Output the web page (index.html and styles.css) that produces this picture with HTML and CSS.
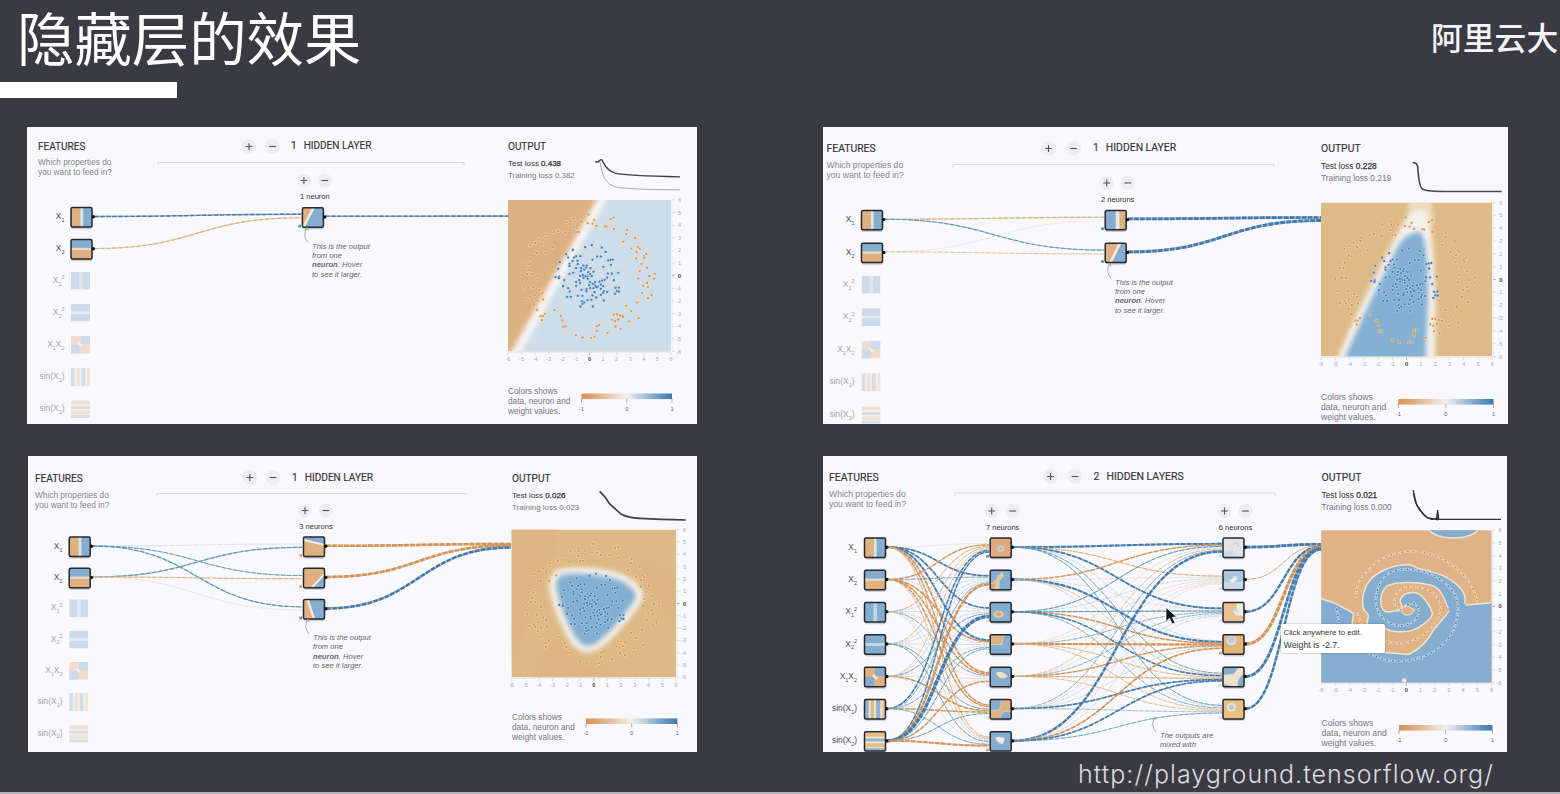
FILE: index.html
```
<!DOCTYPE html>
<html lang="zh-CN">
<head>
<meta charset="utf-8">
<title>隐藏层的效果</title>
<link rel="stylesheet" href="styles.css">
</head>
<body>
<div class="slide">
  <header class="slide-header">
    <h1 class="slide-title">隐藏层的效果</h1>
    <div class="brand">阿里云大</div>
  </header>
  <div class="accent-bar"></div>
  <main class="panels">
    <section class="panel panel-a">
      <svg class="network" id="net-a" viewBox="27 126.5 670 297"></svg>
      <div class="features"><h2>FEATURES</h2><p>Which properties do<br>you want to feed in?</p></div>
      <h2 class="layers"><span>1</span><span>HIDDEN LAYER</span></h2>
      <div class="output"><h2>OUTPUT</h2><p class="loss">Test loss <b>0.438</b></p><p class="loss train">Training loss 0.382</p><p class="legend">Colors shows<br>data, neuron and<br>weight values.</p></div>
    </section>
    <section class="panel panel-b">
      <svg class="network" id="net-b" viewBox="823 126.5 685 297"></svg>
      <div class="features"><h2>FEATURES</h2><p>Which properties do<br>you want to feed in?</p></div>
      <h2 class="layers"><span>1</span><span>HIDDEN LAYER</span></h2>
      <div class="output"><h2>OUTPUT</h2><p class="loss">Test loss <b>0.228</b></p><p class="loss train">Training loss 0.219</p><p class="legend">Colors shows<br>data, neuron and<br>weight values.</p></div>
    </section>
    <section class="panel panel-c">
      <svg class="network" id="net-c" viewBox="28 456 669 296"></svg>
      <div class="features"><h2>FEATURES</h2><p>Which properties do<br>you want to feed in?</p></div>
      <h2 class="layers"><span>1</span><span>HIDDEN LAYER</span></h2>
      <div class="output"><h2>OUTPUT</h2><p class="loss">Test loss <b>0.026</b></p><p class="loss train">Training loss 0.023</p><p class="legend">Colors shows<br>data, neuron and<br>weight values.</p></div>
    </section>
    <section class="panel panel-d">
      <svg class="network" id="net-d" viewBox="823 456 684 296"></svg>
      <div class="features"><h2>FEATURES</h2><p>Which properties do<br>you want to feed in?</p></div>
      <h2 class="layers"><span>2</span><span>HIDDEN LAYERS</span></h2>
      <div class="output"><h2>OUTPUT</h2><p class="loss">Test loss <b>0.021</b></p><p class="loss train">Training loss 0.000</p><p class="legend">Colors shows<br>data, neuron and<br>weight values.</p></div>
      <div class="weight-tip">Click anywhere to edit.<br><span>Weight is -2.7.</span></div>
    </section>
  </main>
  <footer class="source">http://playground.tensorflow.org/</footer>
</div>
<script src="network.js"></script>
</body>
</html>
```
FILE: styles.css
```
* { box-sizing: border-box; }
body { margin: 0; background: #3a3a43; font-family: "Liberation Sans", Arial, sans-serif; }
h1, h2, p { margin: 0; font-weight: 400; }
.slide { width: 1560px; height: 794px; display: flex; flex-direction: column; border-bottom: 2px solid #b4b4b8; background: #3a3a43; }
.slide-header { height: 82px; flex: none; display: flex; justify-content: space-between; color: #fff; font-family: "Noto Sans CJK SC", sans-serif; white-space: nowrap; }
.slide-title { font-size: 57.4px; line-height: 72px; padding-left: 17px; }
.brand { font-size: 31.8px; line-height: 72px; width: 129px; font-weight: 500; color: #f4f4f7; }
.accent-bar { width: 177px; height: 16px; flex: none; background: #fff; }
.panels { display: grid; grid-template-columns: 670px 685px; grid-template-rows: 297px 296px; column-gap: 126px; row-gap: 32.4px; padding: 28.6px 0 0 27px; }
.panel { position: relative; overflow: hidden; display: grid; background: #f9f8fd; color: #333338; }
.panel-a { grid-template-columns: 253px 217px 1fr; padding: 14px 0 6.5px 11px; --head: 10px; --body: 8.25px; }
.panel-b { grid-template-columns: 266.5px 228px 1fr; padding: 16px 0 1.5px 3.5px; --head: 10.4px; --body: 8.65px; }
.panel-c { margin-left: 1px; grid-template-columns: 257px 220px 1fr; padding: 17px 0 10px 7px; --head: 10.1px; --body: 8.3px; }
.panel-d { margin-right: 1px; grid-template-columns: 264.5px 228px 1fr; padding: 16px 0 3.5px 6px; --head: 10.5px; --body: 8.65px; }
.panel h2 { position: relative; font-family: Roboto, sans-serif; font-size: var(--head); line-height: 12px; white-space: nowrap; -webkit-text-stroke: 0.15px #333338; }
.features p { position: relative; font-size: var(--body); line-height: 10px; margin-top: 5.5px; color: #85858c; }
.layers { display: flex; gap: 7px; top: -0.5px; }
.output { position: relative; display: flex; flex-direction: column; white-space: nowrap; }
.loss { font-size: calc(var(--body) - 0.3px); line-height: 12px; margin-top: 5px; }
.loss b { font-weight: 400; -webkit-text-stroke: 0.25px #333338; }
.loss.train { color: #77777e; margin-top: 0; }
.legend { margin-top: auto; font-size: var(--body); line-height: 10px; color: #77777e; }
.network { position: absolute; inset: 0; width: 100%; height: 100%; font-family: "Liberation Sans", Arial, sans-serif; }
.weight-tip { position: absolute; left: 458px; top: 168px; width: 104px; height: 29px; padding: 3px 2.5px; border-radius: 2px; background: #fff; box-shadow: 0 0 2px rgba(0,0,0,.4); font-size: 7.8px; line-height: 12px; color: #333338; white-space: nowrap; }
.weight-tip span { font-size: 8.8px; }
.source { height: 38px; margin-top: 4px; padding-right: 66px; text-align: right; font: 300 25px/37px Inter, sans-serif; letter-spacing: 1.05px; color: #dcdce0; white-space: nowrap; }
```
FILE: network.js
```
const ORANGE = '#dfb180', BLUE = '#84add0', INK = '#25262e';

// Training samples, in units of a 488 x 455 plot.
const outer = [[325,282],[400,291],[391,296],[342,298],[282,294],[259,305],[284,303],[303,303],[323,308],[337,309],[349,316],[374,317],[379,318],[401,325],[441,329],[438,341],[282,319],[288,335],[296,334],[235,331],[222,335],[256,337],[199,342],[196,351],[177,357],[165,367],[150,375],[187,370],[217,379],[163,395],[171,397],[196,397],[465,353],[429,363],[453,384],[473,379],[478,384],[469,394],[498,401],[491,407],[468,414],[492,413],[484,430],[500,442],[478,452],[523,460],[507,467],[521,475],[474,474],[500,487],[489,496],[503,499],[485,517],[514,524],[503,533],[471,546],[438,556],[453,572],[475,593],[447,603],[152,416],[137,431],[148,431],[145,448],[125,463],[142,461],[155,461],[172,477],[131,499],[160,500],[178,509],[187,517],[164,524],[137,535],[151,530],[155,537],[172,541],[189,537],[162,552],[171,568],[195,580],[182,587],[188,587],[186,599],[223,569],[242,587],[247,600],[250,619],[256,618],[287,644],[307,651],[333,652],[343,649],[349,631],[350,617],[357,614],[382,637],[421,625],[406,618],[401,582],[410,582],[420,585],[428,588],[395,598],[404,602],[414,597]];
const inner = [[335,374],[315,380],[365,381],[278,388],[376,394],[258,401],[264,411],[288,407],[301,407],[282,411],[337,417],[351,408],[362,408],[239,425],[268,430],[277,422],[292,421],[293,431],[268,437],[384,420],[391,418],[398,417],[392,433],[369,439],[310,435],[320,435],[234,445],[288,443],[303,443],[312,447],[318,441],[331,443],[268,460],[279,457],[302,452],[324,455],[340,454],[383,459],[395,459],[414,457],[226,470],[237,468],[236,473],[300,466],[308,464],[316,467],[322,468],[330,461],[335,467],[252,479],[297,479],[310,472],[323,475],[381,471],[373,478],[401,479],[288,484],[300,488],[330,485],[345,485],[358,483],[366,480],[288,496],[327,494],[338,490],[345,495],[353,498],[362,492],[369,497],[249,497],[264,503],[304,508],[319,506],[330,503],[340,503],[349,500],[269,513],[319,512],[343,515],[362,505],[371,512],[381,514],[369,517],[406,502],[416,501],[410,512],[416,513],[404,520],[362,523],[261,529],[272,529],[293,526],[307,526],[337,525],[348,531],[305,542],[322,539],[334,538],[371,540],[312,546],[307,550],[301,558],[338,558]];

const rect = (x, y, w, h, fill, extra = '') => `<rect x="${x}" y="${y}" width="${w}" height="${h}" fill="${fill}" ${extra}/>`;
const text = (x, y, s, size, fill, extra = '') => `<text x="${x}" y="${y}" font-size="${size}" fill="${fill}" ${extra}>${s}</text>`;

// Smooth curve through a list of points.
function smooth(p, closed) {
  const n = p.length, at = i => closed ? p[(i + n) % n] : p[Math.max(0, Math.min(n - 1, i))];
  let d = `M${p[0]}`;
  for (let i = 0; i < (closed ? n : n - 1); i++) {
    const [a, b, c, e] = [at(i - 1), at(i), at(i + 1), at(i + 2)];
    d += `C${b[0] + (c[0] - a[0]) / 6},${b[1] + (c[1] - a[1]) / 6} ${c[0] - (e[0] - b[0]) / 6},${c[1] - (e[1] - b[1]) / 6} ${c}`;
  }
  return d + (closed ? 'Z' : '');
}

// Heat-map thumbnails, drawn on a 20 x 20 square.
const art = {
  x1: rect(0,0,20,20,ORANGE) + rect(11,0,9,20,BLUE) + rect(9,0,2.6,20,'#dce4e6'),
  x1r: rect(0,0,20,20,BLUE) + rect(13,0,7,20,ORANGE) + rect(10,0,3.5,20,'#eee9df'),
  x2: rect(0,0,20,20,ORANGE) + rect(0,0,20,9,BLUE) + rect(0,8.5,20,2.3,'#e4dfc9'),
  x1s: rect(0,0,20,20,BLUE) + rect(8.5,0,3.5,20,'#bed5e6'),
  x2s: rect(0,0,20,20,BLUE) + rect(0,8.5,20,3,'#c1dbe6'),
  x1x2: rect(0,0,20,20,ORANGE) + rect(10,0,10,9,BLUE) + rect(0,10,9,10,BLUE) + '<path d="M8 8l4 4" stroke="#f3ead8" stroke-width="2.4"/>',
  s1: rect(0,0,20,20,'#f1e2c8') + rect(0,0,4,20,'#8db7d1') + rect(6,0,3,20,'#e4b884') + rect(11,0,4,20,'#8db3d3') + rect(17,0,3,20,'#e8c28f'),
  s2: rect(0,0,20,20,'#f1e2c8') + rect(0,1,20,4,'#e6bd89') + rect(0,7,20,3,'#8db5d1') + rect(0,12,20,4,'#e6bd89') + rect(0,17,20,3,'#8db7d1'),
  diagA: rect(0,0,20,20,BLUE) + '<path d="M0 0H10L2 20H0Z" fill="#dfb180"/><path d="M10.5 0L1 20" stroke="#f3ecdf" stroke-width="2.5"/>',
  diagB: rect(0,0,20,20,BLUE) + '<path d="M0 0H14L5 20H0Z" fill="#dfb180"/><path d="M14 0L5 20" stroke="#f3ecdf" stroke-width="2.5"/>',
  slope: rect(0,0,20,20,ORANGE) + '<path d="M0 0H20V7L0 3Z" fill="#84add0"/><path d="M0 3L20 8" stroke="#f3ecdf" stroke-width="2"/>',
  corner: rect(0,0,20,20,ORANGE) + '<path d="M20 6V20H8Z" fill="#84add0"/><path d="M20 6L8 20" stroke="#f3ecdf" stroke-width="2"/>',
  left: rect(0,0,20,20,BLUE) + '<path d="M0 0H4L10 20H0Z" fill="#dfb180"/><path d="M4 0L10 20" stroke="#f3ecdf" stroke-width="2.2"/>',
  n1: rect(0,0,20,20,'#dcaa7e') + '<circle cx="10" cy="11" r="3.2" fill="#d5cfca"/><circle cx="10" cy="11" r="1.5" fill="#9db9cf"/>',
  n2: rect(0,0,20,20,BLUE) + '<path d="M0 13Q6 12 7 5L12 2L13 6L9 11L9 20H0Z" fill="#dfc9a4"/><path d="M1 14L5 13L4 19H1Z" fill="#dfa870"/>',
  n3: rect(0,0,20,20,BLUE) + '<ellipse cx="8" cy="12" rx="5" ry="3.6" fill="#e6cda8"/><ellipse cx="8" cy="12" rx="3" ry="2" fill="#dfa870"/>',
  n4: rect(0,0,20,20,BLUE) + '<path d="M0 0H13L11 10H0Z" fill="#dfb180" stroke="#e9dcc4" stroke-width=".7"/>',
  n5: rect(0,0,20,20,BLUE) + '<path d="M5 6Q10 3 14 7L17 9Q13 13 9 11Z" fill="#efdfc4"/>',
  n6: rect(0,0,20,20,ORANGE) + '<path d="M0 0H10Q12 8 7 11L0 12ZM20 12L14 12Q9 15 9 20H20Z" fill="#84add0" stroke="#e9dcc4" stroke-width=".7"/>',
  n7: rect(0,0,20,20,BLUE) + '<path d="M5 6Q10 4 14 7L12 13Q6 12 5 6Z" fill="#f0ead9"/>',
  h1: rect(0,0,20,20,'#e5e3e5') + '<path d="M0 14Q8 10 12 16T20 10V20H0Z" fill="#cddce9"/><path d="M9 7Q14 3 15 9" fill="none" stroke="#c5d6e4" stroke-width="2"/><path d="M6 12Q9 10 10 7" fill="none" stroke="#f0dcc4" stroke-width="1.6"/>',
  h2: rect(0,0,20,20,'#a9c6de') + rect(0,12,20,8,'#c5d9e8') + '<path d="M5 10Q9 10 11 5L14 9L9 13Z" fill="#e9eef0"/>',
  h3: rect(0,0,20,20,'#e8c28e') + '<path d="M20 0H12Q16 6 9 9L12 13L20 14Z" fill="#f1ebde"/><circle cx="12" cy="8" r="2" fill="#c6d9e3"/>',
  h4: rect(0,0,20,20,'#e2b578') + '<circle cx="8" cy="6" r="4.8" fill="#ecdfcc"/><circle cx="8" cy="5" r="3.5" fill="#b6cfe0"/>',
  h5: rect(0,0,20,20,'#efe2cd') + '<path d="M0 0H15L10 7L0 8ZM20 6V20H14Q13 13 20 6ZM0 17L10 20H0Z" fill="#84add0"/>',
  h6: rect(0,0,20,20,'#e8c084') + '<circle cx="8" cy="8" r="4.2" fill="#f1e8d8"/><circle cx="8" cy="8" r="2.5" fill="#aec9db"/>'
};
const names = ['x1', 'x2', 'x1s', 'x2s', 'x1x2', 's1', 's2'];

function node(cx, cy, key, active = true) {
  const w = active ? 21 : 19, h = active ? 19.4 : 17.8, x = cx - 10.5, y = cy - h / 2;
  let s = active ? rect(x + .3, y + 2.2, w, h, '#000', 'rx="2" opacity=".18"') : '';
  s += `<svg x="${x}" y="${y}" width="${w}" height="${h}" viewBox="0 0 20 20" preserveAspectRatio="none" opacity="${active ? 1 : .38}">${art[key]}</svg>`;
  if (active) s += rect(x, y, w, h, 'none', `rx="1.5" stroke="${INK}" stroke-width="1.5"`) + `<circle cx="${cx + 11.8}" cy="${cy - .5}" r="1.7" fill="#111"/>`;
  return s;
}

function label(x, y, i, active) {
  const sub = (t, dy = 2.8) => `<tspan font-size="5.5" dy="${dy}">${t}</tspan>`;
  const forms = [
    'X' + sub(1), 'X' + sub(2),
    'X' + sub(1) + sub(2, -6.2), 'X' + sub(2) + sub(2, -6.2),
    'X' + sub(1) + '<tspan dy="-2.8">X</tspan>' + sub(2),
    'sin(X' + sub(1) + '<tspan dy="-2.8">)</tspan>', 'sin(X' + sub(2) + '<tspan dy="-2.8">)</tspan>'];
  return text(x, y + 2, forms[i], 8.4, active ? '#4c4c55' : '#a4a4ab', 'text-anchor="end"');
}

function link(x0, y0, x1, y1, w) {
  const a = Math.abs(w), m = (x0 + x1) / 2;
  const color = a < .6 ? (w > 0 ? '#b3c8d0' : '#decdb8') : w > 0 ? (a >= 1.6 ? '#437aac' : '#5b9ab2') : (a >= 1.6 ? '#d29355' : '#deb07c');
  const d = `M${x0} ${y0}C${m} ${y0} ${m} ${y1} ${x1} ${y1}`;
  return `<path d="${d}" fill="none" stroke="${color}" stroke-width="${a * .75}" opacity=".5"/><path d="${d}" fill="none" stroke="${color}" stroke-width="${a * .75}" stroke-dasharray="4.6 1.4"/>`;
}

function button(x, y, plus, r = 7) {
  return `<circle cx="${x}" cy="${y}" r="${r}" fill="#eeedf1"/><path d="M${x - 3.4} ${y}h6.8${plus ? `M${x} ${y - 3.4}v6.8` : ''}" stroke="#55555c" stroke-width="1.1"/>`;
}

function callout(x, y, lines) {
  let s = `<path d="M${x - 4} ${y - 4}q-6-7-1-15m-2 3l2-3 1 3" fill="none" stroke="#a1a1a8" stroke-width=".9"/>`;
  lines.forEach((t, i) => { s += text(x, y + 2 + i * 9.4, t, 7.6, '#66666e', 'font-style="italic"'); });
  return s;
}
const hover = ['This is the output', 'from one', '<tspan font-weight="700">neuron</tspan>. Hover', 'to see it larger.'];

function axes([x, y, w, h]) {
  let s = `<path d="M${x} ${y + h + 1}h${w}M${x + w + 1} ${y}v${h}" stroke="#ddd" stroke-width=".5"/>`;
  for (let i = -6; i <= 6; i++) {
    const px = x + (i + 6) / 12 * w, py = y + (6 - i) / 12 * h, c = i ? '#a9a9af' : '#444', e = i ? '' : 'font-weight="700" ';
    s += `<path d="M${px} ${y + h + 1}v2.5M${x + w + 1} ${py}h2.5" stroke="${i ? '#ccc' : '#777'}" stroke-width=".6"/>`;
    s += text(px, y + h + 9.5, i, 5.6, c, e + 'text-anchor="middle"') + text(x + w + 10, py + 2, i, 5.6, c, e + 'text-anchor="end"');
  }
  return s;
}

function legend(x0, x1, y, id) {
  const m = (x0 + x1) / 2;
  let s = `<linearGradient id="scale${id}"><stop offset="0" stop-color="#d5935a"/><stop offset=".1" stop-color="#dca06a"/><stop offset=".5" stop-color="#f1f0ef"/><stop offset=".9" stop-color="#5b8fbf"/><stop offset="1" stop-color="#4078ae"/></linearGradient>` + rect(x0, y, x1 - x0, 5.6, `url(#scale${id})`);
  [[x0, -1], [m, 0], [x1, 1]].forEach(([x, v]) => { s += `<path d="M${x} ${y + 5}v4" stroke="#888" stroke-width=".7"/>` + text(x, y + 17, v, 5.8, '#666', 'text-anchor="middle"'); });
  return s;
}

function samples([x, y, w, h]) {
  const dot = (c, halo) => ([a, b]) => {
    const at = `cx="${x + (a - 84) / 488 * w}" cy="${y + (b - 238) / 455 * h}"`;
    return `<circle ${at} r="1.85" fill="${halo}" opacity=".6"/><circle ${at} r="1.15" fill="${c}"/>`;
  };
  return outer.map(dot('#dc924a', '#f3dfc4')).join('') + inner.map(dot('#3f7bb4', '#c5d9e9')).join('');
}

function field([x, y, w, h], base, content) {
  return `<svg x="${x}" y="${y}" width="${w}" height="${h}" viewBox="0 0 100 100" preserveAspectRatio="none"><defs><filter id="soft" x="-50%" y="-50%" width="200%" height="200%"><feGaussianBlur stdDeviation="1.7"/></filter></defs>${rect(0,0,100,100,base)}${content}</svg>`;
}

function draw(c) {
  let s = `<path d="M${c.bracket[0]} ${c.bracket[2] + 3}v-3H${c.bracket[1]}v3" fill="none" stroke="#dcdbe0" stroke-width="1"/>`;
  s += button(c.add[0], c.add[2], true, 7.5) + button(c.add[1], c.add[2], false, 7.5);
  s += c.links();
  c.layers.forEach(l => {
    s += button(l.x - 9, l.by, true) + button(l.x + 12, l.by, false) + text(l.x + 2, l.by + 18.5, l.name, 7.5, '#333338', 'text-anchor="middle"');
    l.keys.forEach((k, i) => {
      s += node(l.x, l.ys[i], k) + rect(l.x - 14.5, l.ys[i] + 7.3, 2.6, 2.6, l.bias[i] > 0 ? '#4d8ab0' : l.bias[i] < 0 ? '#dd9a5e' : '#dddde0');
    });
  });
  c.fy.forEach((y, i) => { const on = i < c.active; s += node(c.fx, y, names[i], on) + label(c.lx, y, i, on); });
  s += c.field + axes(c.plot) + (c.samples || '');
  s += legend(...c.legend, c.id) + (c.extra || '');
  s += `<g transform="translate(${c.origin}) scale(.33333)" fill="none">${c.chart}</g>`;
  document.getElementById('net-' + c.id).innerHTML = s;
}

const pa = [508, 199.4, 163, 151.6];
draw({ id: 'a', bracket: [158, 464, 162], add: [249, 272.5, 146], fx: 81.5, lx: 64.5, active: 2,
  fy: [216.8, 248.8, 280.2, 312.2, 344.3, 376.5, 408.5],
  layers: [{ x: 312.9, by: 180, name: '1 neuron', ys: [217], keys: ['diagA'], bias: [1] }],
  links: () => link(94, 216, 301, 213.8, 1.9) + link(94, 248, 301, 217.3, -1.5) + link(325, 215.8, 508, 215.6, 2.1).replaceAll('#437aac', '#4c8aa8'),
  plot: pa, samples: samples(pa), legend: [581.5, 672, 393],
  field: field(pa, '#dcb083', '<path d="M57 0H110V110H0L5 100Z" fill="#cddde9"/><path d="M60 -5L1 108" stroke="#f8f4f2" stroke-width="5.5" filter="url(#soft)"/>'),
  extra: callout(312, 246, hover), origin: '480 120',
  chart: '<path d="M345 124H360Q368 190 405 199Q435 207 600 208" stroke="#aaa" stroke-width="3"/><path d="M345 124H354L362 118Q366 115 369 125Q383 152 406 158Q440 166 600 169" stroke="#3d3d42" stroke-width="4"/>' });

const pb = [1321, 202, 171.3, 154];
draw({ id: 'b', bracket: [953, 1274, 164], add: [1048.5, 1073.5, 148], fx: 872, lx: 854.5, active: 2,
  fy: [219.6, 252.4, 284.2, 316.6, 349.2, 381.6, 414.4],
  layers: [{ x: 1115.7, by: 182.5, name: '2 neurons', ys: [219.6, 252.4], keys: ['x1r', 'diagB'], bias: [1, 1] }],
  links: () => link(884, 218.8, 1104, 216.8, -1.5) + link(884, 251.4, 1104, 220.5, -.4) + link(884, 251.4, 1104, 253.5, -.8) + link(884, 218.8, 1104, 249.6, 1.4) + link(1128, 218.4, 1321, 217, 3.6) + link(1128, 251.4, 1321, 220, 3.8),
  plot: pb, samples: samples(pb), legend: [1398.3, 1493.5, 398.5],
  field: field(pb, '#deba87', '<path d="M52 -5H64L66 14L49 16Z" fill="#f3e6d2" opacity=".75" filter="url(#soft)"/><path d="M52 8Q58 2 63 8C67 35 67.5 80 66 108H7C18 77 32 48 45 19Z" fill="#f5f1ee" filter="url(#soft)"/><path d="M12 106C22 80 31 58 41 38C46 24 50 20 57 19C62 21 62 42 62.5 60C62 80 61 95 61 106Z" fill="#84b0d2" filter="url(#soft)"/>'),
  extra: callout(1115, 282, hover), origin: '1290 120',
  chart: '<path d="M368 127Q380 125 383 138Q387 199 397 205Q403 213 460 213H635" stroke="#47474c" stroke-width="5"/>' });

const pc = [511.4, 529.6, 164.6, 147.8];
const blob = smooth([[29,29],[42,27.5],[62,30.5],[73,36.5],[78,45],[71,58],[56,76],[47,81],[39,77],[31,61],[26,45],[25,36]], true);
draw({ id: 'c', bracket: [157, 466, 493.5], add: [249.8, 273, 477.5], fx: 79.7, lx: 62.5, active: 2,
  fy: [546.8, 578, 608.2, 639.6, 670.9, 702, 733.5],
  layers: [{ x: 314, by: 510.5, name: '3 neurons', ys: [546.8, 578, 609.3], keys: ['slope', 'corner', 'left'], bias: [-1, -1, 1] }],
  links: () => link(92, 546, 302, 544, .5) + link(92, 546, 302, 575.5, 1.2) + link(92, 577, 302, 547.3, 1.59) + link(92, 577, 302, 578.7, -1.3) + link(92, 577, 302, 610, -.5) + link(92, 546, 302, 606.8, 1.59) + link(326, 545.8, 511, 544, -3.4) + link(326, 577, 511, 545.5, -3.3) + link(326, 608.5, 511, 547.5, 3.2),
  plot: pc, samples: samples(pc), legend: [586, 677.4, 718.4],
  field: field(pc, '#ddb985', `<path d="M-5 -5H30L0 90ZM75 20L105 35V75ZM10 105L28 70L40 88L90 110Z" fill="#ddb080" opacity=".4" filter="url(#soft)"/><path d="${blob}" fill="#83b0d2" stroke="#f7f2ec" stroke-width="4" filter="url(#soft)"/>`),
  extra: callout(313, 638, hover), origin: '480 450',
  chart: '<path d="M359 124L375 141L389 162L405 176L423 192Q440 203 480 205Q540 208 617 210" stroke="#3f3f44" stroke-width="5"/>' });

const F = [
  [-.5, 2, 2, 2.4, -2, -1.8, -1.2], [-1.6, .9, .5, -1.8, -1.8, -1.7, -1],
  [-1.3, .59, .59, .59, .9, -.59, .59], [-1, .59, .59, .59, -.59, 1, 1],
  [-.8, .59, 1, -.59, .59, -1.8, -.59], [1.8, .9, .59, .9, -.59, -1.7, .9],
  [1.7, -3, 4.2, 1, -1.7, 1, -2.4]];
const H = [
  [2.6, -1.3, 2.2, .59, 1, 1.1], [-1.7, -.59, -.59, 2.6, -.8, .59], [1.3, .59, 1.4, -1.7, 1.8, .8],
  [-.59, -.59, .8, -2.8, -1, -.9], [-.8, -.59, .7, -1.6, -1.4, -.9], [.8, -.59, .59, .59, 2, .6], [2.9, -.59, .59, -2, 2, 1]];
const O = [3.6, -1.3, 2.8, -4, 3.5, 3];
const y1 = [547.7, 580, 612.3, 644.5, 677, 709.2, 741.4], y2 = y1.slice(0, 6);
const pd = [1321.2, 530.3, 170.3, 152.3];
const trail = (p, c, halo) => `<path d="${smooth(p)}" stroke="${halo}" stroke-width="8" stroke-linecap="round" stroke-dasharray="8 9" opacity=".65"/><path d="${smooth(p)}" stroke="${c}" stroke-width="4.5" stroke-linecap="round" stroke-dasharray="2 15" stroke-dashoffset="-3"/>`;
const bl = (...p) => trail(p, '#4280b8', '#d5e4ee'), or = (...p) => trail(p, '#d98e4a', '#f3dfc6');
draw({ id: 'd', bracket: [955, 1275, 493], add: [1050.5, 1075, 476.5], fx: 875, lx: 857, active: 7, fy: y1,
  layers: [
    { x: 1000.7, by: 511, name: '7 neurons', ys: y1, keys: ['n1', 'n2', 'n3', 'n4', 'n5', 'n6', 'n7'], bias: [1, 0, 0, 0, 0, 0, -1] },
    { x: 1233.5, by: 511, name: '6 neurons', ys: y2, keys: ['h1', 'h2', 'h3', 'h4', 'h5', 'h6'], bias: [0, 0, 0, -1, 0, 0] }],
  links: () => {
    let s = '';
    F.forEach((r, i) => r.forEach((w, j) => { s += link(887, y1[i] - .6, 989, y1[j] + (i - 3) / 7 * 10, w); }));
    H.forEach((r, i) => r.forEach((w, j) => { s += link(1013, y1[i] - .6, 1222, y1[j] + (i - 3) / 7 * 9, w); }));
    O.forEach((w, i) => { s += link(1245.5, y1[i] - .6, 1321.5, 544.3 + i, w); });
    return s;
  },
  plot: pd, field: rect(...pd, '#dfb387') + `<svg x="1321.2" y="530.3" width="170.3" height="152.3" viewBox="153 241 511 457" preserveAspectRatio="none"><g fill="#84adcf" stroke="#eee5cf" stroke-width="4.5" stroke-linejoin="round"><path d="M140 442L195 460L250 490L246 520L300 608H345L415 614Q465 590 490 540L540 480L590 465L680 457V715H140Z"/><path d="M540 482L583 462C592 430 570 405 520 378C480 360 440 358 430 348C400 338 350 350 310 380C280 405 272 450 280 478L295 495L290 525L345 535C370 550 420 550 450 530C470 515 485 505 487 490C475 455 450 425 425 428C395 430 385 450 393 462C400 475 392 487 345 485C325 470 328 430 350 408C380 393 450 395 490 408C520 425 522 450 532 470Z"/><ellipse cx="550" cy="234" rx="74" ry="30"/></g><path d="M534 474L581 458L590 470L545 500Z" fill="#84adcf"/><path d="M392 480Q400 462 412 468L434 480Q425 498 405 495Q395 492 392 480Z" fill="#dfb387" stroke="#eee5cf" stroke-width="3"/><circle cx="402" cy="692" r="7" fill="#eee9d8"/></svg>`,
  legend: [1399, 1492.5, 725], extra: callout(1160, 736, ['The outputs are', 'mixed with']) +
    '<path d="M1166 607.5V621.5L1169.5 618.3L1172.3 624L1175 622.7L1172.3 617.4L1176.5 616.8Z" fill="#151518" stroke="#fff" stroke-width=".7"/>',
  origin: '1270 450',
  chart: '<path d="M430 120Q432 160 448 175Q460 202 485 208L500 205L503 180L506 208H693" stroke="#333338" stroke-width="4"/><path d="M432 130Q440 178 456 186Q468 205 490 208M470 203L503 209V192" stroke="#333338" stroke-width="4"/>' +
    or([258,440],[270,390],[330,330],[400,306],[460,308],[520,328],[580,375],[610,420],[622,455]) +
    or([260,480],[266,500],[280,530]) + or([350,575],[400,580],[460,555],[500,510],[512,470],[495,435],[460,415],[410,412],[380,430],[374,460],[387,480],[405,470]) +
    bl([200,475],[207,515]) + bl([300,613],[350,630],[400,633],[460,620],[510,590],[545,550],[562,500],[562,455],[545,420],[510,388],[460,365],[400,358],[350,375],[322,420],[320,470],[345,510],[390,527],[430,515],[447,485],[435,462],[410,465]) });
```
